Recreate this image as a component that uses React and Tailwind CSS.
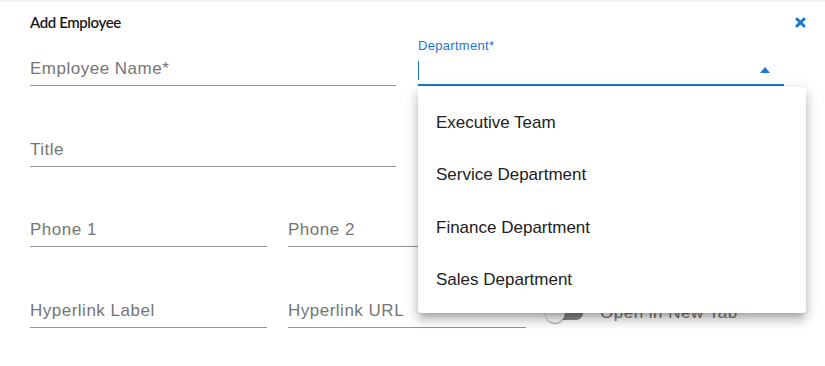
import React from 'react'

const font = { fontFamily: '"Liberation Sans", Arial, sans-serif' }

const Field = ({ label, className = '' }) => (
  <div className={`h-[48px] flex items-end border-b border-[#949494] pb-[6px] ${className}`}>
    <span className="text-[17px] leading-[20px] tracking-[0.5px] text-[#757575]">{label}</span>
  </div>
)

const departments = ['Executive Team', 'Service Department', 'Finance Department', 'Sales Department']

export default function App() {
  return (
    <div className="relative w-[825px] h-[366px] bg-white overflow-hidden" style={font}>
      <div className="h-[3px] bg-gradient-to-b from-[#ececec] to-white" />

      <div className="flex items-center justify-between pl-[30px] pr-[19px] pt-[6px] h-[32px]">
        <span className="text-[15px] font-semibold text-[#1a1a1a] tracking-[-0.4px]" style={{ fontFamily: 'Lato, sans-serif' }}>
          Add Employee
        </span>
        <svg width="11" height="11" viewBox="0 0 11 11">
          <path d="M2 2 L9 9 M9 2 L2 9" stroke="#1976d2" strokeWidth="3" strokeLinecap="round" />
        </svg>
      </div>

      <div className="px-[30px] pt-[3px] flex flex-col gap-[32.7px]">
        <div className="flex gap-[22px]">
          <Field label="Employee Name*" className="w-[366px]" />
          <div className="w-[366px] h-[48px] flex flex-col border-b-2 border-[#1976d2]">
            <span className="text-[13px] leading-[16px] tracking-[0.3px] text-[#1976d2]">Department*</span>
            <div className="flex-1 flex items-center justify-between pr-[14px]">
              <div className="w-px h-[19px] bg-[#1976d2] mt-[2px]" />
              <svg width="10" height="6" viewBox="0 0 10 6" className="mt-[2px]">
                <path d="M0 6 L5 0 L10 6 Z" fill="#1976d2" />
              </svg>
            </div>
          </div>
        </div>

        <div className="flex">
          <Field label="Title" className="w-[366px]" />
        </div>

        <div className="flex gap-[21px]">
          <Field label="Phone 1" className="w-[237px]" />
          <Field label="Phone 2" className="w-[238px]" />
        </div>

        <div className="flex gap-[21px] items-end">
          <Field label="Hyperlink Label" className="w-[237px]" />
          <Field label="Hyperlink URL" className="w-[238px]" />
          <div className="flex items-center gap-[17px] pb-[5px] -ml-[2px]">
            <div className="relative w-[38px] h-[20px] flex items-center">
              <div className="ml-[4px] w-[34px] h-[14px] rounded-full bg-[#8a8a8a]" />
              <div className="absolute left-0 top-0 w-[20px] h-[20px] rounded-full bg-[#fafafa] shadow-[0_2px_1px_-1px_rgba(0,0,0,0.2),0_1px_1px_0_rgba(0,0,0,0.14),0_1px_3px_0_rgba(0,0,0,0.12)]" />
            </div>
            <span className="text-[17px] leading-[20px] tracking-[0.5px] text-[#757575]">Open in New Tab</span>
          </div>
        </div>
      </div>

      <div className="absolute left-[418px] top-[87px] w-[388px] h-[226px] bg-white rounded-[4px] pt-[9px] pb-[7px] shadow-[0px_5px_5px_-3px_rgba(0,0,0,0.2),0px_8px_10px_1px_rgba(0,0,0,0.14),0px_3px_14px_2px_rgba(0,0,0,0.12)]">
        {departments.map(d => (
          <div key={d} className="h-[52.5px] flex items-center pl-[18px] text-[17px] text-[#212121]">
            {d}
          </div>
        ))}
      </div>
    </div>
  )
}
